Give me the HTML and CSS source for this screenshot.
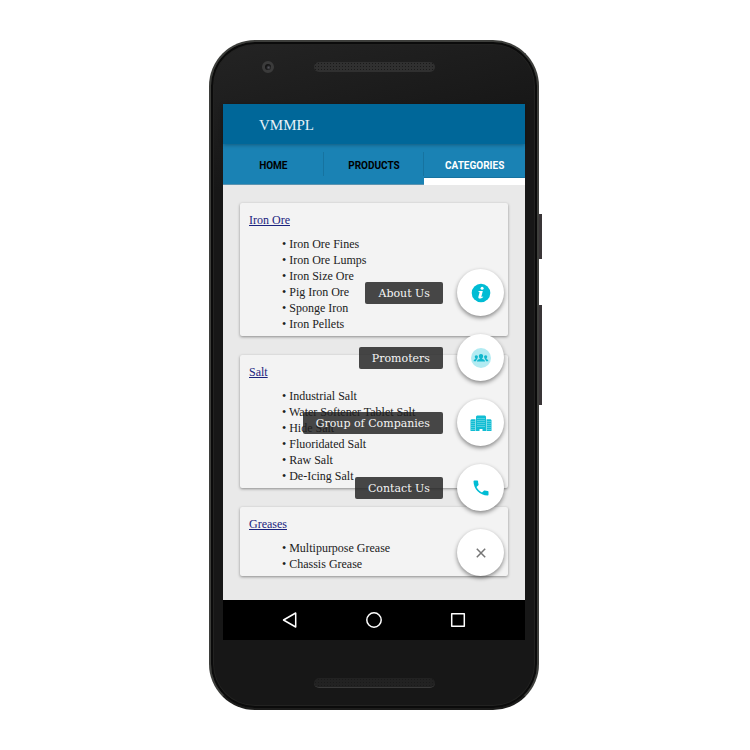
FILE: index.html
```html
<!DOCTYPE html>
<html lang="en">
<head>
<meta charset="utf-8">
<meta name="viewport" content="width=device-width, initial-scale=1">
<title>VMMPL</title>
<link rel="stylesheet" href="styles.css">
</head>
<body>
<div class="phone">
  <span class="side-key power-key"></span>
  <span class="side-key volume-key"></span>
  <div class="bezel bezel-top">
    <span class="camera"></span>
    <span class="speaker"></span>
  </div>
  <div class="screen">
    <header class="app-bar"><h1 class="app-title">VMMPL</h1></header>
    <nav class="tabs" aria-label="Sections">
      <a class="tab" href="#home">HOME</a>
      <a class="tab" href="#products">PRODUCTS</a>
      <a class="tab tab-active" href="#categories" aria-current="page">CATEGORIES</a>
    </nav>
    <main class="content">
      <section class="card">
        <h2 class="card-title"><a href="#iron-ore">Iron Ore</a></h2>
        <ul class="items">
          <li>Iron Ore Fines</li>
          <li>Iron Ore Lumps</li>
          <li>Iron Size Ore</li>
          <li>Pig Iron Ore</li>
          <li>Sponge Iron</li>
          <li>Iron Pellets</li>
        </ul>
      </section>
      <section class="card">
        <h2 class="card-title"><a href="#salt">Salt</a></h2>
        <ul class="items">
          <li>Industrial Salt</li>
          <li>Water Softener Tablet Salt</li>
          <li>Hide Salt</li>
          <li>Fluoridated Salt</li>
          <li>Raw Salt</li>
          <li>De-Icing Salt</li>
        </ul>
      </section>
      <section class="card">
        <h2 class="card-title"><a href="#greases">Greases</a></h2>
        <ul class="items">
          <li>Multipurpose Grease</li>
          <li>Chassis Grease</li>
        </ul>
      </section>

      <div class="speed-dial">
        <div class="action">
          <label class="action-label" for="about">About Us</label>
          <button class="fab" id="about" type="button">
            <svg width="20" height="20" viewBox="0 0 20 20" aria-hidden="true">
              <circle cx="10" cy="10" r="9.3" fill="#00bcd4"/>
              <circle cx="11.1" cy="5.3" r="1.5" fill="#fff"/>
              <path d="M7.5 8h4.3l-1.4 5.6c-.1.5.5.5 1.6-.1l.3.6c-1.300 1.200-2.500 1.500-3.500 1.500-1.300 0-1.700-.8-1.400-1.900L8.600 9.200c-.4-.3-.8-.4-1.300-.4z" fill="#fff"/>
            </svg>
          </button>
        </div>
        <div class="action">
          <label class="action-label" for="promoters">Promoters</label>
          <button class="fab" id="promoters" type="button">
            <svg width="20" height="20" viewBox="0 0 20 20" aria-hidden="true">
              <circle cx="10" cy="10" r="10" fill="#b2ebf2"/>
              <g fill="#11b8cd">
                <path d="M10 6c1.600 0 2.300 1.100 2.100 2.500-.1 1-.5 1.500-.9 1.900v.7c1.400.4 2.700.7 2.900 2.500H5.900c.2-1.800 1.500-2.100 2.900-2.500v-.7c-.4-.4-.8-.9-.9-1.900C7.700 7.100 8.400 6 10 6z"/>
                <path d="M5.300 7.300c1.100 0 1.700.8 1.600 1.800-.1.700-.3 1.100-.6 1.400v.6c-.8.500-1.200 1.200-1.300 2.200H2.600c.1-1.400 1-1.800 1.900-2.200v-.6c-.4-.3-.6-.7-.7-1.400-.1-1 .4-1.800 1.500-1.800z"/>
                <path d="M14.700 7.300c-1.100 0-1.700.8-1.600 1.800.1.700.3 1.100.6 1.400v.6c.8.500 1.200 1.200 1.300 2.200h2.400c-.1-1.400-1-1.800-1.900-2.200v-.6c.4-.3.6-.7.7-1.400.1-1-.4-1.800-1.500-1.800z"/>
              </g>
            </svg>
          </button>
        </div>
        <div class="action">
          <label class="action-label" for="companies">Group of Companies</label>
          <button class="fab" id="companies" type="button">
            <svg width="22" height="16" viewBox="0 0 22 16" aria-hidden="true">
              <path d="M6 16V1.500L7 .5h8l1 1V16h-3.500v-2h-3v2zM.5 16V5l1-.8h4V16zM21.500 16V5l-1-.8h-4V16z" fill="#11bdd3"/>
              <g stroke="#8fe2ec" stroke-width="1" stroke-dasharray="1 1">
                <path d="M8 3v10M10 3v10M12 3v10M14 3v10"/>
                <path d="M2 6v9M4 6v9M18 6v9M20 6v9"/>
              </g>
            </svg>
          </button>
        </div>
        <div class="action">
          <label class="action-label" for="contact">Contact Us</label>
          <button class="fab" id="contact" type="button">
            <svg width="20" height="20" viewBox="0 0 24 24" aria-hidden="true">
              <path d="M6.620 10.790c1.440 2.830 3.760 5.140 6.590 6.590l2.200-2.200c.27-.27.670-.36 1.020-.24 1.120.37 2.330.57 3.570.57.550 0 1 .45 1 1V20c0 .55-.45 1-1 1-9.390 0-17-7.610-17-17 0-.55.450-1 1-1h3.500c.55 0 1 .45 1 1 0 1.250.2 2.450.57 3.570.11.350.03.740-.25 1.020l-2.200 2.200z" fill="#00bcd4"/>
            </svg>
          </button>
        </div>
        <div class="action">
          <button class="fab" type="button" aria-label="Close">
            <svg width="10" height="10" viewBox="0 0 10 10" aria-hidden="true">
              <path d="M.8.8l8.400 8.400M9.200.8L.8 9.200" stroke="#757575" stroke-width="1.500"/>
            </svg>
          </button>
        </div>
      </div>
    </main>
    <div class="system-bar">
      <button class="key" type="button" aria-label="Back">
        <svg width="16" height="16" viewBox="0 0 16 16"><path d="M13.700 1v14L1.500 8z" fill="none" stroke="#fff" stroke-width="1.500" stroke-linejoin="round"/></svg>
      </button>
      <button class="key" type="button" aria-label="Home">
        <svg width="16" height="16" viewBox="0 0 16 16"><circle cx="8" cy="8" r="7.200" fill="none" stroke="#fff" stroke-width="1.500"/></svg>
      </button>
      <button class="key" type="button" aria-label="Recent apps">
        <svg width="16" height="16" viewBox="0 0 16 16"><path d="M1.700 1.700h12.600v12.600H1.700z" fill="none" stroke="#fff" stroke-width="1.500" stroke-linejoin="round"/></svg>
      </button>
    </div>
  </div>
  <div class="bezel bezel-bottom">
    <span class="speaker speaker-bottom"></span>
  </div>
</div>
</body>
</html>
```
FILE: styles.css
```css
* {
  box-sizing: border-box;
}

body {
  margin: 0;
  min-height: 100vh;
  padding-right: 2px;
  display: flex;
  align-items: center;
  justify-content: center;
  background: #fff;
  font-family: "Liberation Serif", serif;
}

a {
  color: inherit;
}

.phone {
  position: relative;
  width: 44%;
  min-width: 330px;
  max-width: 400px;
  padding: 0 12px;
  border: 2px solid #3d3e3b;
  border-bottom-color: #1c1c1b;
  border-radius: 46px;
  background: linear-gradient(165deg, #242424 0, #171717 20%);
  box-shadow: inset 0 0 0 2px #0b0b0b, inset 0 0 0 3px #222221;
}

.side-key {
  position: absolute;
  left: 100%;
  margin-left: 2px;
  width: 3px;
  background: #393537;
}

.power-key {
  top: 172px;
  height: 45px;
}

.volume-key {
  top: 263px;
  height: 100px;
}

.bezel {
  display: grid;
  grid-template-columns: 1fr 121px 1fr;
  align-items: start;
}

.bezel-top {
  height: 62px;
  padding-top: 19px;
}

.bezel-bottom {
  height: 68px;
  padding-top: 38px;
}

.camera {
  justify-self: center;
  width: 12px;
  height: 12px;
  border: 3px solid #3b3b3b;
  border-radius: 50%;
  background: radial-gradient(circle at 60% 60%, #55555c 0, #151515 50%);
}

.speaker {
  grid-column: 2;
  height: 10px;
  margin-top: 1px;
  border-radius: 5px;
  background: radial-gradient(circle, #1a1a1a 1px, transparent 1px) 0 0 / 3px 3px #303030;
}

.speaker-bottom {
  margin-top: 0;
  border-bottom: 1px solid #3a3a3a;
  background-color: #222;
}

.screen {
  display: flex;
  flex-direction: column;
  background: #e9e9e9;
}

.app-bar {
  position: relative;
  z-index: 1;
  display: flex;
  align-items: center;
  height: 40px;
  padding: 2px 36px 0;
  background: #006799;
  box-shadow: 0 1px 4px rgba(0, 0, 0, 0.3);
}

.app-title {
  margin: 0;
  color: #e8f3f8;
  font-size: 15px;
  font-weight: 400;
}

.tabs {
  display: flex;
  height: 41px;
  border-bottom: 1px solid #5b93b0;
  background: #1a82b4;
  font: 700 10px Roboto, sans-serif;
}

.tab {
  flex: 1;
  display: flex;
  align-items: center;
  justify-content: center;
  padding-top: 2px;
  color: #000;
  text-decoration: none;
  background: linear-gradient(#1673a0, #1673a0) right 8px / 1px 24px no-repeat;
}

.tab-active {
  margin-bottom: -1px;
  padding-top: 8px;
  border-bottom: 7px solid #fff;
  background: none;
  color: #fff;
  box-shadow: inset 0 -1px #1673a0;
}

.content {
  position: relative;
  display: flex;
  flex-direction: column;
  gap: 19px;
  padding: 18px 17px 24px;
}

.card {
  padding: 9px 9px 4px;
  border-radius: 2px;
  background: #f3f3f3;
  box-shadow: 0 1px 3px rgba(0, 0, 0, 0.4);
  font-size: 12px;
  line-height: 16px;
}

.card-title {
  margin: 0 0 8px;
  color: #1a237e;
  font-size: 12px;
  font-weight: 400;
}

.items {
  margin: 0;
  padding: 0 0 0 33px;
  list-style: none;
  color: #212121;
}

.items li::before {
  content: "• ";
}

.speed-dial {
  position: absolute;
  right: 21px;
  bottom: 24px;
  display: flex;
  flex-direction: column;
  align-items: flex-end;
  gap: 18px;
}

.action {
  display: flex;
  align-items: center;
  gap: 14px;
}

.action-label {
  padding: 2px 13px 0;
  border-radius: 2px;
  background: rgba(32, 32, 32, 0.82);
  color: #f5f5f5;
  font: 11px/20px "DejaVu Serif", serif;
  white-space: nowrap;
}

.fab {
  display: flex;
  align-items: center;
  justify-content: center;
  width: 47px;
  height: 47px;
  padding: 0;
  border: 0;
  border-radius: 50%;
  background: #fff;
  box-shadow: 0 2px 4px rgba(0, 0, 0, 0.45);
}

.system-bar {
  display: flex;
  align-items: center;
  justify-content: center;
  gap: 68px;
  height: 40px;
  background: #000;
}

.key {
  display: flex;
  padding: 0;
  border: 0;
  background: none;
}
```
